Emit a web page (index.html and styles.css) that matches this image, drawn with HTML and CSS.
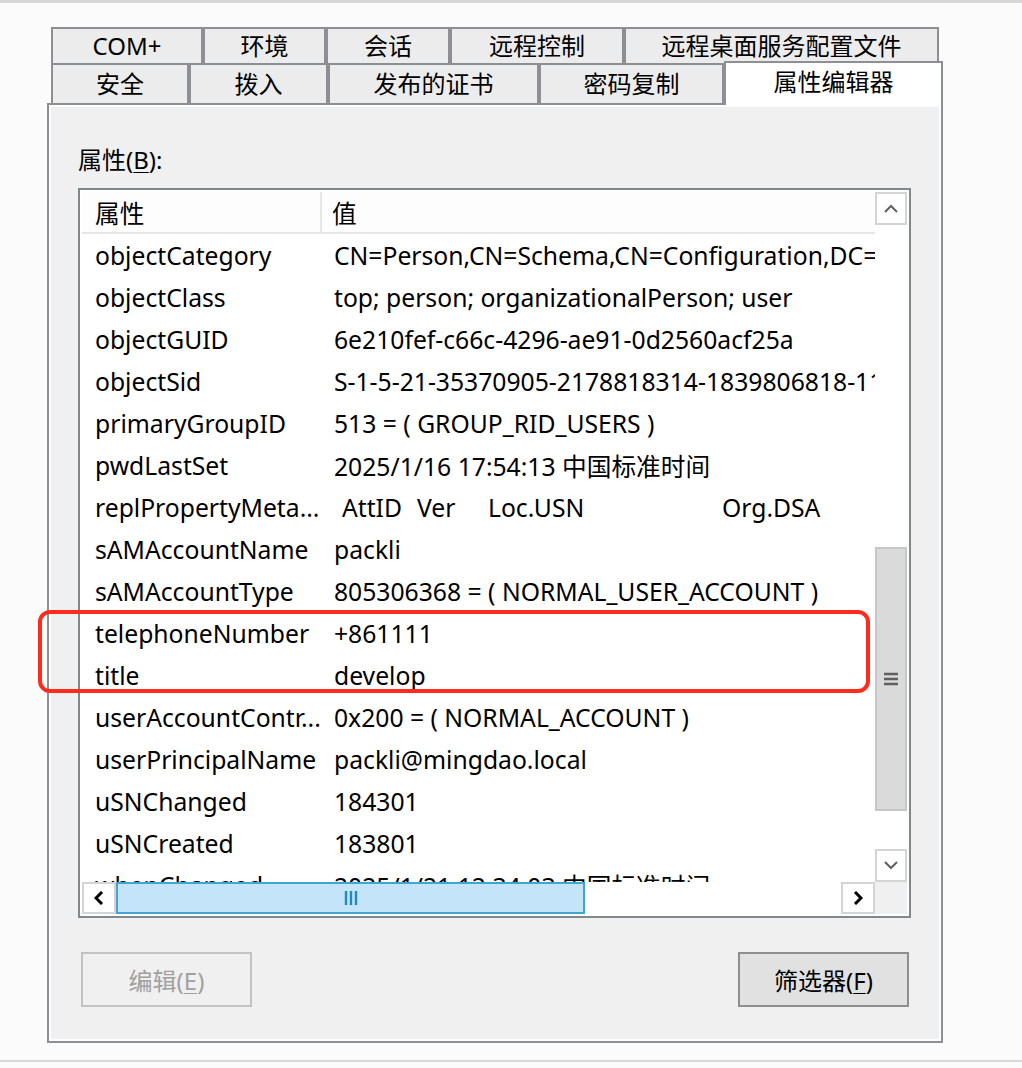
FILE: index.html
```html
<!DOCTYPE html>
<html lang="zh-CN">
<head>
    <meta charset="UTF-8">
    <meta name="viewport" content="width=device-width, initial-scale=1.0">
    <title>属性编辑器</title>
    <link rel="stylesheet" href="styles.css">
</head>
<body>
    <div class="top-line"></div>
    <div class="screen">
        <div class="dialog">
            <div class="tab-row tab-row-back">
                <div class="tab t-com">COM+</div>
                <div class="tab t-env">环境</div>
                <div class="tab t-session">会话</div>
                <div class="tab t-remote">远程控制</div>
                <div class="tab t-rds">远程桌面服务配置文件</div>
            </div>
            <div class="tab-row tab-row-front">
                <div class="tab t-security">安全</div>
                <div class="tab t-dialin">拨入</div>
                <div class="tab t-certs">发布的证书</div>
                <div class="tab t-pwd">密码复制</div>
                <div class="tab tab-active">属性编辑器</div>
            </div>

            <div class="panel">
                <div class="field-label">属性(<u>B</u>):</div>

                <div class="listview">
                    <div class="list-main">
                        <div class="list-head">
                            <div class="col-name">属性</div>
                            <div class="col-value">值</div>
                        </div>
                        <div class="list-body">
                            <div class="row"><div class="col-name">objectCategory</div><div class="col-value">CN=Person,CN=Schema,CN=Configuration,DC=mingdao,DC=local</div></div>
                            <div class="row"><div class="col-name">objectClass</div><div class="col-value">top; person; organizationalPerson; user</div></div>
                            <div class="row"><div class="col-name">objectGUID</div><div class="col-value">6e210fef-c66c-4296-ae91-0d2560acf25a</div></div>
                            <div class="row"><div class="col-name">objectSid</div><div class="col-value">S-1-5-21-35370905-2178818314-1839806818-1105</div></div>
                            <div class="row"><div class="col-name">primaryGroupID</div><div class="col-value">513 = ( GROUP_RID_USERS )</div></div>
                            <div class="row"><div class="col-name">pwdLastSet</div><div class="col-value">2025/1/16 17:54:13 中国标准时间</div></div>
                            <div class="row">
                                <div class="col-name">replPropertyMeta...</div>
                                <div class="col-value repl">
                                    <span class="repl-attid">AttID</span><span class="repl-ver">Ver</span><span class="repl-usn">Loc.USN</span><span>Org.DSA</span>
                                </div>
                            </div>
                            <div class="row"><div class="col-name">sAMAccountName</div><div class="col-value">packli</div></div>
                            <div class="row"><div class="col-name">sAMAccountType</div><div class="col-value">805306368 = ( NORMAL_USER_ACCOUNT )</div></div>
                            <div class="row"><div class="col-name">telephoneNumber</div><div class="col-value">+861111</div></div>
                            <div class="row"><div class="col-name">title</div><div class="col-value">develop</div></div>
                            <div class="row"><div class="col-name">userAccountContr...</div><div class="col-value">0x200 = ( NORMAL_ACCOUNT )</div></div>
                            <div class="row"><div class="col-name">userPrincipalName</div><div class="col-value">packli@mingdao.local</div></div>
                            <div class="row"><div class="col-name">uSNChanged</div><div class="col-value">184301</div></div>
                            <div class="row"><div class="col-name">uSNCreated</div><div class="col-value">183801</div></div>
                            <div class="row"><div class="col-name">whenChanged</div><div class="col-value">2025/1/21 12:34:03 中国标准时间</div></div>
                        </div>
                    </div>

                    <!-- vertical scrollbar -->
                    <div class="vscroll">
                        <div class="sb-btn">
                            <svg width="14" height="9" viewBox="0 0 14 9"><polyline points="1,8 7,2 13,8" fill="none" stroke="#606060" stroke-width="2"/></svg>
                        </div>
                        <div class="vthumb">
                            <svg width="14" height="14" viewBox="0 0 14 14"><path d="M0 2h14M0 7h14M0 12h14" stroke="#5f5f5f" stroke-width="2.4"/></svg>
                        </div>
                        <div class="sb-fill"></div>
                        <div class="sb-btn">
                            <svg width="14" height="9" viewBox="0 0 14 9"><polyline points="1,1 7,7 13,1" fill="none" stroke="#606060" stroke-width="2"/></svg>
                        </div>
                    </div>

                    <!-- horizontal scrollbar -->
                    <div class="hscroll">
                        <div class="sb-btn sb-btn-h">
                            <svg width="10" height="14" viewBox="0 0 10 14"><polyline points="8,1 2,7 8,13" fill="none" stroke="#000" stroke-width="3"/></svg>
                        </div>
                        <div class="hthumb">
                            <svg width="14" height="14" viewBox="0 0 14 14"><path d="M2 0v14M7 0v14M12 0v14" stroke="#1f8bbd" stroke-width="2.4"/></svg>
                        </div>
                        <div class="sb-fill"></div>
                        <div class="sb-btn sb-btn-h">
                            <svg width="10" height="14" viewBox="0 0 10 14"><polyline points="2,1 8,7 2,13" fill="none" stroke="#000" stroke-width="3"/></svg>
                        </div>
                    </div>
                    <div class="corner"></div>
                </div>

                <div class="buttons">
                    <button class="btn btn-disabled">编辑(<u>E</u>)</button>
                    <button class="btn">筛选器(<u>F</u>)</button>
                </div>
            </div>
        </div>

        <div class="highlight"></div>
    </div>
    <div class="bottom-line"></div>
</body>
</html>
```

FILE: styles.css
```css
body {
    margin: 0;
    padding: 0;
    background-color: #fbfbfb;
    font-family: "Noto Sans", "Noto Sans CJK SC", sans-serif;
    font-size: 24px;
    color: #000;
}
.top-line {
    height: 3px;
    background-color: #d6d6d6;
}
.screen {
    position: relative;
    padding-top: 24px;
}
.dialog {
    margin-left: 47px;
    width: 896px;
}

/* tabs */
.tab-row {
    display: flex;
    padding-left: 4px;
}
.tab {
    box-sizing: border-box;
    border: 2px solid #8c8f94;
    border-bottom: none;
    background-color: #ececec;
    display: flex;
    align-items: center;
    justify-content: center;
    white-space: nowrap;
    line-height: 1;
}
.tab-row-back .tab {
    height: 36px;
}
.tab-row-front {
    align-items: flex-end;
    height: 40px;
}
.tab-row-front .tab {
    height: 40px;
}
.t-com { width: 152px; }
.t-env { width: 123px; }
.t-session { width: 124px; }
.t-remote { width: 174px; }
.t-rds { width: 315px; }
.t-security { width: 138px; }
.t-dialin { width: 139px; }
.t-certs { width: 211px; }
.t-pwd { width: 185px; }
.tab-row-front .tab-active {
    width: 219px;
    height: 44px;
    margin-bottom: -2px;
    background-color: #fff;
    position: relative;
    z-index: 1;
    padding-bottom: 4px;
}

/* property page */
.panel {
    border: 2px solid #8c8f94;
    box-shadow: inset 0 0 0 2px #fdfdfd;
    background-color: #f0f0f0;
    padding: 40px 30px 34px 29px;
}
.field-label {
    height: 30px;
    line-height: 30px;
}
.field-label u, .btn u {
    text-decoration-thickness: 1px;
    text-underline-offset: 3px;
}

.listview {
    margin-top: 13px;
    height: 722px;
    border: 2px solid #82868d;
    padding: 2px;
    background-color: #fff;
    display: grid;
    grid-template-columns: 1fr 32px;
    grid-template-rows: 1fr 32px;
    font-size: 24.7px;
}
.list-main {
    overflow: hidden;
}
.list-head {
    display: flex;
    height: 40px;
    background-color: #fdfdfd;
    border-bottom: 2px solid #e6e6e6;
    align-items: center;
}
.list-head .col-name {
    height: 40px;
    display: flex;
    align-items: center;
    border-right: 2px solid #e6e6e6;
}
.list-head .col-value {
    padding-left: 10px;
}
.list-body {
    height: 648px;
    overflow: hidden;
}
.row {
    display: flex;
    height: 42px;
    align-items: center;
}
.col-name {
    box-sizing: border-box;
    width: 240px;
    flex-shrink: 0;
    padding-left: 13px;
    white-space: nowrap;
    overflow: hidden;
}
.col-value {
    padding-left: 12px;
    white-space: nowrap;
}
.repl {
    display: flex;
    padding-left: 20px;
}
.repl-attid { width: 75px; }
.repl-ver { width: 71px; }
.repl-usn { width: 234px; }

/* scrollbars */
.vscroll {
    display: flex;
    flex-direction: column;
    background-color: #fff;
}
.sb-btn {
    box-sizing: border-box;
    height: 33px;
    border: 2px solid #d4d4d4;
    background-color: #fff;
    display: flex;
    align-items: center;
    justify-content: center;
    flex-shrink: 0;
}
.sb-fill {
    flex: 1;
}
.vthumb {
    box-sizing: border-box;
    margin-top: 322px;
    height: 264px;
    background-color: #dadada;
    border: 2px solid #c6c6c6;
    display: flex;
    align-items: center;
    justify-content: center;
}
.hscroll {
    display: flex;
    background-color: #fff;
}
.sb-btn-h {
    width: 34px;
    height: 32px;
}
.hthumb {
    box-sizing: border-box;
    width: 469px;
    height: 32px;
    background-color: #c4e5f9;
    border: 2px solid #3ea6d0;
    display: flex;
    align-items: center;
    justify-content: center;
}
.corner {
    background-color: #f0f0f0;
}

/* buttons */
.buttons {
    display: flex;
    justify-content: space-between;
    margin-top: 34px;
    padding: 0 2px 0 3px;
}
.btn {
    width: 171px;
    height: 55px;
    font-family: inherit;
    font-size: 24px;
    background-color: #e1e1e1;
    border: 2px solid #8e8e8e;
    color: #000;
    padding: 0;
}
.btn-disabled {
    background-color: #f0f0f0;
    border-color: #c2c2c2;
    color: #a0a0a0;
}

/* red annotation round two rows */
.highlight {
    position: absolute;
    left: 38px;
    top: 607px;
    width: 832px;
    height: 83px;
    box-sizing: border-box;
    border: 4px solid #ff2b1c;
    border-radius: 12px;
}
.bottom-line {
    margin-top: 17px;
    height: 2px;
    background-color: #d8d8d8;
}
```
